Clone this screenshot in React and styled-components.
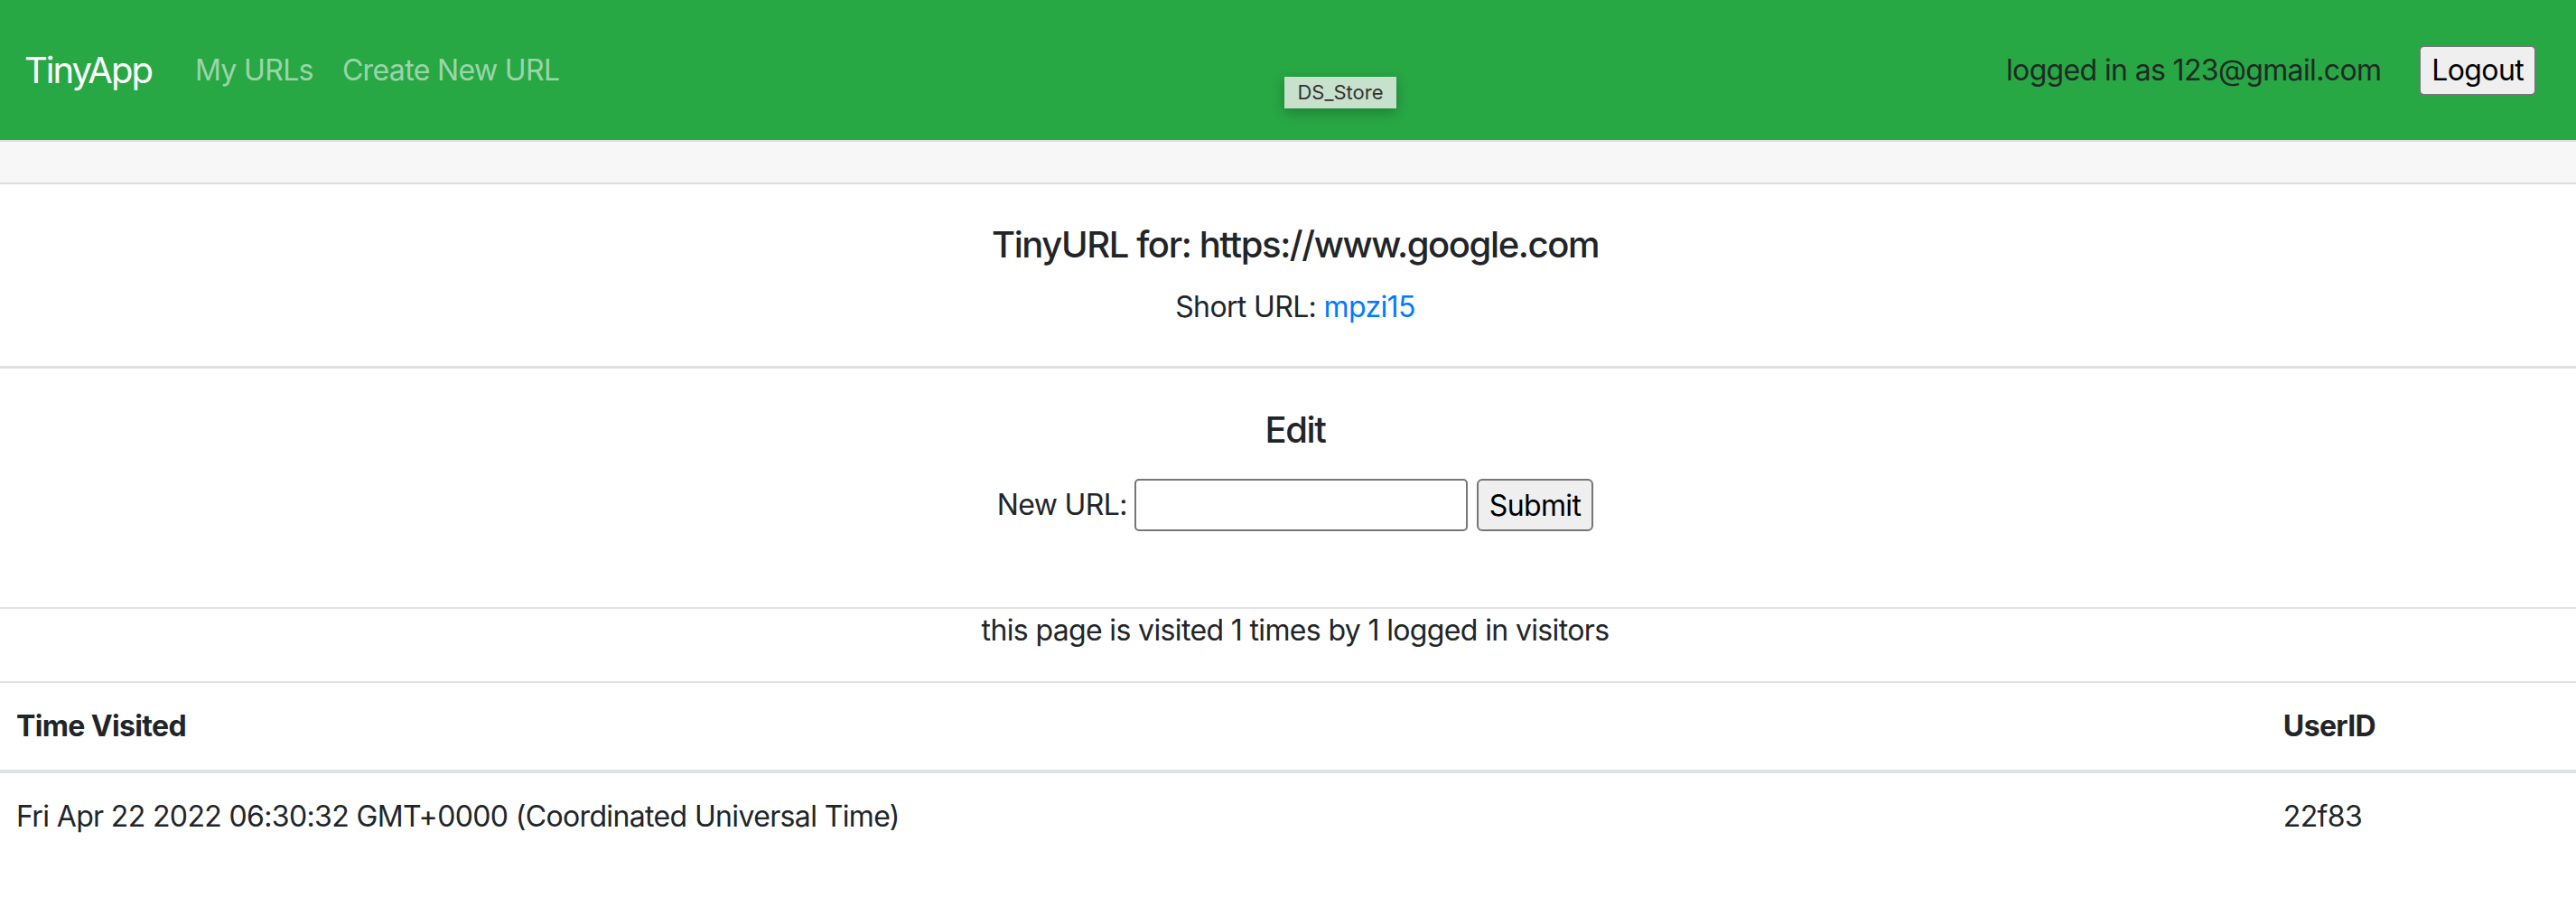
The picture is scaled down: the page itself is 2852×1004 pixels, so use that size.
import React from "react";
import styled, { createGlobalStyle } from "styled-components";

const GlobalStyle = createGlobalStyle`
  body {
    margin: 0;
    background: #fff;
    color: #212529;
    font-family: Inter, "Noto Sans", sans-serif;
    font-size: 32px;
    line-height: 1.5;
    letter-spacing: -0.02em;
  }
`;

const Navbar = styled.nav`
  position: relative;
  height: 155px;
  background-color: #28a745;
  display: flex;
  align-items: center;
  padding: 0 44px 0 27px;
  box-sizing: border-box;
`;

const Brand = styled.a`
  color: #fff;
  font-size: 40px;
  letter-spacing: -0.05em;
  margin-right: 32px;
  text-decoration: none;
`;

const NavLink = styled.a`
  color: rgba(255, 255, 255, 0.55);
  padding: 0 16px;
  text-decoration: none;
`;

const NavRight = styled.div`
  margin-left: auto;
  display: flex;
  align-items: center;
  gap: 42px;
`;

const NavText = styled.span`
  color: #1f2a24;
`;

const NativeButton = styled.button`
  font-family: inherit;
  font-size: 32px;
  letter-spacing: -0.02em;
  color: #000;
  background: #efefef;
  border: 2px solid #767676;
  border-radius: 6px;
  height: ${(p) => p.$h || 56}px;
  padding: 0 12px;
`;

const Tooltip = styled.div`
  position: absolute;
  left: 1422px;
  top: 85px;
  width: 124px;
  height: 35px;
  display: flex;
  align-items: center;
  justify-content: center;
  background: #c8e1cd;
  color: #333;
  font-size: 22px;
  letter-spacing: 0;
  box-shadow: 0 4px 14px rgba(0, 0, 0, 0.25);
`;

const CardHeader = styled.div`
  height: 45px;
  background: #f7f7f7;
  border-top: 2px solid #dedede;
  border-bottom: 2px solid #dedede;
`;

// content in the reference sits ~8px right of the page centre
const Section = styled.section`
  text-align: center;
  padding: ${(p) => p.$pad};
  padding-left: 16px;
  border-bottom: ${(p) => p.$border || "none"};
`;

const Title = styled.h5`
  margin: 0;
  font-size: 40px;
  font-weight: 500;
  line-height: 1.2;
  letter-spacing: -0.035em;
`;

const Para = styled.p`
  margin: ${(p) => p.$m || 0};
  text-align: ${(p) => p.$align || "inherit"};
  padding-left: ${(p) => (p.$align === "center" ? "16px" : 0)};
`;

const Link = styled.a`
  color: #007bff;
  text-decoration: none;
`;

const Form = styled.form`
  margin-top: 30px;
  display: flex;
  justify-content: center;
  align-items: center;
`;

const Label = styled.label`
  margin-right: 8px;
`;

const Input = styled.input`
  width: 369px;
  height: 58px;
  box-sizing: border-box;
  border: 2px solid #767676;
  border-radius: 5px;
  margin-right: 10px;
  font-size: 32px;
`;

const Table = styled.table`
  width: 100%;
  border-collapse: collapse;
  margin-top: 32px;
  th,
  td {
    text-align: left;
    padding: 24px 18px;
    border-top: 2px solid #dee2e6;
    line-height: 48px;
  }
  th {
    font-weight: 700;
    border-bottom: 4px solid #dee2e6;
  }
`;

const visits = [
  { time: "Fri Apr 22 2022 06:30:32 GMT+0000 (Coordinated Universal Time)", user: "22f83" },
];

export default function App() {
  return (
    <>
      <GlobalStyle />
      <Navbar>
        <Brand href="#">TinyApp</Brand>
        <NavLink href="#">My URLs</NavLink>
        <NavLink href="#">Create New URL</NavLink>
        <NavRight>
          <NavText>logged in as 123@gmail.com</NavText>
          <NativeButton>Logout</NativeButton>
        </NavRight>
        <Tooltip>DS_Store</Tooltip>
      </Navbar>
      <CardHeader />
      <Section $pad="43px 0 41px" $border="3px solid #dedede">
        <Title>TinyURL for: https://www.google.com</Title>
        <Para $m="21px 0 0">
          Short URL: <Link href="#">mpzi15</Link>
        </Para>
      </Section>
      <Section $pad="44px 0 84px" $border="2px solid #e2e2e2">
        <Title>Edit</Title>
        <Form onSubmit={(e) => e.preventDefault()}>
          <Label>New URL:</Label>
          <Input type="text" />
          <NativeButton $h={58}>Submit</NativeButton>
        </Form>
      </Section>
      <Para $align="center">
        this page is visited 1 times by 1 logged in visitors
      </Para>
      <Table>
        <thead>
          <tr>
            <th>Time Visited</th>
            <th>UserID</th>
          </tr>
        </thead>
        <tbody>
          {visits.map((v) => (
            <tr key={v.time}>
              <td>{v.time}</td>
              <td>{v.user}</td>
            </tr>
          ))}
        </tbody>
      </Table>
    </>
  );
}
